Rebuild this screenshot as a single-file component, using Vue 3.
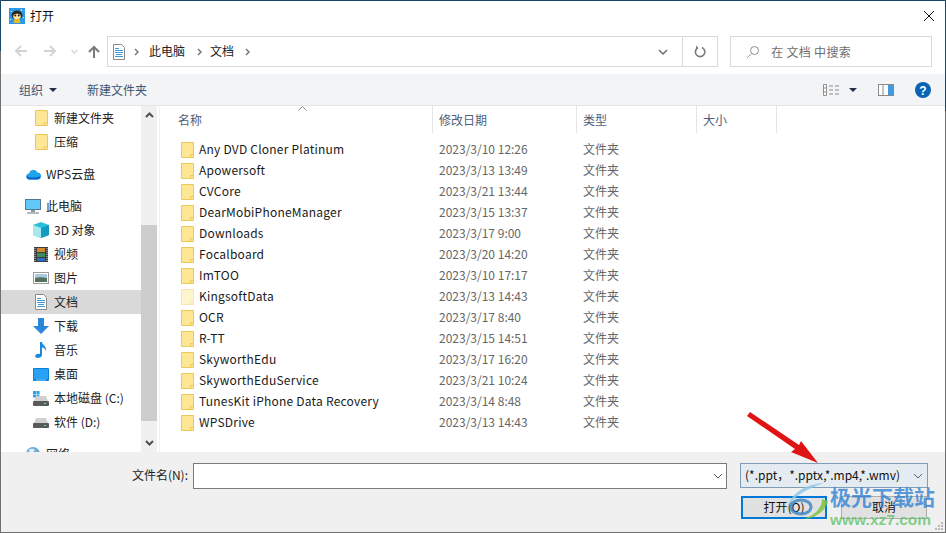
<script setup>
const sideItems = [
  { label: '新建文件夹', icon: 'folder', level: 2 },
  { label: '压缩', icon: 'folder', level: 2 },
  { label: 'WPS云盘', icon: 'cloud', level: 1, gap: true },
  { label: '此电脑', icon: 'pc', level: 1, gap: true },
  { label: '3D 对象', icon: 'cube', level: 2 },
  { label: '视频', icon: 'film', level: 2 },
  { label: '图片', icon: 'pic', level: 2 },
  { label: '文档', icon: 'doc', level: 2, active: true },
  { label: '下载', icon: 'down', level: 2 },
  { label: '音乐', icon: 'note', level: 2 },
  { label: '桌面', icon: 'desk', level: 2 },
  { label: '本地磁盘 (C:)', icon: 'diskc', level: 2 },
  { label: '软件 (D:)', icon: 'disk', level: 2 },
  { label: '网络', icon: 'globe', level: 1, gap: true }
]

const files = [
  { name: 'Any DVD Cloner Platinum', date: '2023/3/10 12:26' },
  { name: 'Apowersoft', date: '2023/3/13 13:49' },
  { name: 'CVCore', date: '2023/3/21 13:44' },
  { name: 'DearMobiPhoneManager', date: '2023/3/15 13:37' },
  { name: 'Downloads', date: '2023/3/17 9:00' },
  { name: 'Focalboard', date: '2023/3/20 14:20' },
  { name: 'ImTOO', date: '2023/3/10 17:17' },
  { name: 'KingsoftData', date: '2023/3/13 14:43', hidden: true },
  { name: 'OCR', date: '2023/3/17 8:40' },
  { name: 'R-TT', date: '2023/3/15 14:51' },
  { name: 'SkyworthEdu', date: '2023/3/17 16:20' },
  { name: 'SkyworthEduService', date: '2023/3/21 10:24' },
  { name: 'TunesKit iPhone Data Recovery', date: '2023/3/14 8:48' },
  { name: 'WPSDrive', date: '2023/3/13 14:43' }
]
</script>

<template>
  <div class="window">
    <div class="titlebar">
      <svg class="app-icon" width="16" height="16" viewBox="0 0 16 16">
        <rect width="16" height="16" fill="#2b9be8" />
        <path d="M2.500 7.500a5.500 5 0 0 1 11 0c0 2.500-2 3.500-5.500 3.500s-5.500-1-5.500-3.500z" fill="#2a2a1e" />
        <ellipse cx="8" cy="8.500" rx="3.800" ry="2.700" fill="#fbe9a8" />
        <circle cx="6.300" cy="7.500" r="1" fill="#1c1c1c" />
        <circle cx="9.700" cy="7.500" r="1" fill="#1c1c1c" />
        <path d="M5.500 11h5l1 4h-7z" fill="#f0b428" />
        <path d="M2 3l1 1M12 1l1 2M14 9l1 1M1 12l1-1" stroke="#d8f0ff" />
      </svg>
      <span class="title">打开</span>
      <svg class="close" width="12" height="12" viewBox="0 0 12 12">
        <path d="M1 1l10 10M11 1L1 11" stroke="#111" stroke-width="1" fill="none" />
      </svg>
    </div>

    <div class="navbar">
      <div class="nav-btns">
        <svg width="13" height="12" viewBox="0 0 13 12"><path d="M13 6H2M7 1L2 6l5 5" stroke="#d3d3d3" stroke-width="2" fill="none" /></svg>
        <svg class="fwd" width="13" height="12" viewBox="0 0 13 12"><path d="M0 6h11M6 1l5 5-5 5" stroke="#d3d3d3" stroke-width="2" fill="none" /></svg>
        <svg class="hist" width="7" height="5" viewBox="0 0 7 5"><path d="M.5 1l3 3 3-3" stroke="#d8d8d8" stroke-width="1.500" fill="none" /></svg>
        <svg class="up" width="12" height="13" viewBox="0 0 12 13"><path d="M6 13V2M1 7l5-5 5 5" stroke="#7a7a7a" stroke-width="2" fill="none" /></svg>
      </div>
      <div class="address">
        <svg class="addr-doc" width="12" height="16" viewBox="0 0 12 16">
          <path d="M.5.500h8l3 3v12H.5z" fill="#fff" stroke="#8a8a8a" />
          <path d="M2 4.500h4M2 6.500h8M2 8.500h8M3 10.500h6M2 12.500h8" stroke="#3f9ad6" />
        </svg>
        <svg class="chev first" width="5" height="8" viewBox="0 0 5 8"><path d="M1 1l3 3-3 3" stroke="#777" stroke-width="1.500" fill="none" /></svg>
        <span class="crumb">此电脑</span>
        <svg class="chev second" width="5" height="8" viewBox="0 0 5 8"><path d="M1 1l3 3-3 3" stroke="#777" stroke-width="1.500" fill="none" /></svg>
        <span class="crumb last">文档</span>
        <svg class="chev" width="5" height="8" viewBox="0 0 5 8"><path d="M1 1l3 3-3 3" stroke="#777" stroke-width="1.500" fill="none" /></svg>
        <span class="spacer"></span>
        <svg class="addr-drop" width="10" height="6" viewBox="0 0 10 6"><path d="M1 1l4 4 4-4" stroke="#707070" stroke-width="1.500" fill="none" /></svg>
        <div class="refresh">
          <svg width="12" height="13" viewBox="0 0 12 13">
            <path d="M3.500 3A4.700 4.700 0 1 0 8 2.600" stroke="#7c7c7c" stroke-width="1.600" fill="none" />
            <path d="M2 1l2.500 2.500L2 5.500z" fill="#7c7c7c" transform="translate(0 -.5)" />
          </svg>
        </div>
      </div>
      <div class="search">
        <svg width="14" height="14" viewBox="0 0 14 14">
          <circle cx="8.500" cy="5.500" r="4" stroke="#8c8c8c" fill="none" />
          <path d="M5.500 8.500L1 13" stroke="#c79a9a" />
        </svg>
        <span class="search-text">在 文档 中搜索</span>
      </div>
    </div>

    <div class="toolbar">
      <span class="tool-btn">组织</span>
      <span class="caret"></span>
      <span class="tool-btn new-folder">新建文件夹</span>
      <span class="spacer"></span>
      <svg width="16" height="12" viewBox="0 0 16 12">
        <path d="M.5.500h3v11h-3zM.5 4h3M.5 8h3" stroke="#8f8f8f" fill="#fff" />
        <path d="M6 2h4M12 2h4M6 6h4M12 6h4M6 10h4M12 10h4" stroke="#8a8a8a" />
      </svg>
      <span class="caret view-caret"></span>
      <svg class="pane-icon" width="16" height="12" viewBox="0 0 16 12">
        <rect x=".5" y=".5" width="15" height="11" fill="#fff" stroke="#8a8a8a" />
        <rect x="10" y="1" width="5" height="10" fill="#3f9ae4" />
        <path d="M5 1v10" stroke="#8a8a8a" />
      </svg>
      <svg class="help" width="16" height="16" viewBox="0 0 16 16">
        <circle cx="8" cy="8" r="8" fill="#0a63b5" />
        <text x="8" y="12.500" text-anchor="middle" class="help-mark">?</text>
      </svg>
    </div>

    <div class="main">
      <div class="sidebar">
        <div
          v-for="item in sideItems"
          :key="item.label"
          class="side-row"
          :class="{ active: item.active, gap: item.gap, top: item.level === 1 }"
        >
          <span class="side-icon">
            <svg v-if="item.icon === 'folder'" width="13" height="16" viewBox="0 0 13 16">
              <path d="M.5.500h12v15H.5z" fill="#fde794" stroke="#eac95a" />
              <path d="M9.500 15.500v-3h3" fill="none" stroke="#eac95a" />
            </svg>
            <svg v-else-if="item.icon === 'cloud'" width="15" height="12" viewBox="0 0 15 12">
              <path d="M3.500 11.500a3 3 0 0 1-.5-6A4.500 4.500 0 0 1 11.500 4.500a3.500 3.500 0 0 1 0 7z" fill="#22a4ec" />
              <path d="M.5 8c3.500 2 9 2 14 0-.3 2-1.500 3.500-3 3.500h-8C2 11.500.8 10 .5 8z" fill="#0b62cc" />
            </svg>
            <svg v-else-if="item.icon === 'pc'" width="16" height="15" viewBox="0 0 16 15">
              <rect x=".5" y=".5" width="15" height="10" fill="#62c8f8" stroke="#55788e" />
              <path d="M6 11h4v2H6z" fill="#8b99a4" />
              <path d="M2 14h12" stroke="#9aa5ad" stroke-width="1.500" />
            </svg>
            <svg v-else-if="item.icon === 'cube'" width="16" height="16" viewBox="0 0 16 16">
              <path d="M8 0l8 3v10l-8 3-8-3V3z" fill="#2cc0d6" />
              <path d="M0 3l8 3v10l-8-3z" fill="#a7e8ee" />
              <path d="M8 6l8-3v10l-8 3z" fill="#139ac0" />
            </svg>
            <svg v-else-if="item.icon === 'film'" width="14" height="15" viewBox="0 0 14 15">
              <rect width="14" height="15" fill="#3c3c3c" />
              <path d="M1 1v13M13 1v13" stroke="#ddd" stroke-dasharray="1 1" />
              <rect x="3" y="1" width="8" height="4" fill="#d18b2c" />
              <rect x="3" y="6" width="8" height="4" fill="#3b8c5a" />
              <rect x="3" y="11" width="8" height="3" fill="#2a6dc4" />
            </svg>
            <svg v-else-if="item.icon === 'pic'" width="16" height="12" viewBox="0 0 16 12">
              <rect x=".5" y=".5" width="15" height="11" fill="#fff" stroke="#9a9a9a" />
              <rect x="2" y="2" width="12" height="4" fill="#a9c9dd" />
              <path d="M2 6c3-1 8-1 12 0v4H2z" fill="#56705f" />
            </svg>
            <svg v-else-if="item.icon === 'doc'" width="12" height="16" viewBox="0 0 12 16">
              <path d="M.5.500h8l3 3v12H.5z" fill="#fff" stroke="#8a8a8a" />
              <path d="M2 4.500h4M2 6.500h8M2 8.500h8M3 10.500h6M2 12.500h8" stroke="#3f9ad6" />
            </svg>
            <svg v-else-if="item.icon === 'down'" width="16" height="16" viewBox="0 0 16 16">
              <path d="M5 0h6v8h5l-8 8-8-8h5z" fill="#2a86dc" />
            </svg>
            <svg v-else-if="item.icon === 'note'" width="12" height="16" viewBox="0 0 12 16">
              <path d="M5 0h2c0 3 5 4 4 9-1-2-2-3.500-4-3.500V13c0 2-2 3-4.500 3S-1 13 2 12c1.500-.5 3-.3 3 .2z" fill="#1a8ae0" />
            </svg>
            <svg v-else-if="item.icon === 'desk'" width="16" height="13" viewBox="0 0 16 13">
              <rect width="16" height="13" rx="1" fill="#0d7fda" />
              <rect x="1" y="1" width="14" height="10" fill="#2aa2f4" />
              <path d="M3 12h10" stroke="#8cd0f8" />
            </svg>
            <svg v-else-if="item.icon === 'diskc'" width="16" height="15" viewBox="0 0 16 15">
              <path d="M0 0h3v3H0zM3.500 0h3v3h-3zM0 3.500h3v3H0zM3.500 3.500h3v3h-3z" fill="#27a0ea" />
              <path d="M1 10l2-5h10l2 5z" fill="#d0d0d0" />
              <rect y="10" width="16" height="5" rx="1" fill="#5a5a5a" />
              <rect x="11" y="12" width="2" height="1" fill="#6ee06e" />
            </svg>
            <svg v-else-if="item.icon === 'disk'" width="16" height="11" viewBox="0 0 16 11">
              <path d="M1 6l2-5h10l2 5z" fill="#d0d0d0" />
              <rect y="6" width="16" height="5" rx="1" fill="#5a5a5a" />
              <rect x="11" y="8" width="2" height="1" fill="#6ee06e" />
            </svg>
            <svg v-else width="14" height="14" viewBox="0 0 14 14">
              <circle cx="7" cy="7" r="7" fill="#6ea9d8" />
              <path d="M3 3c2-2 5-1 6 0-1 2-3 2-4 4-1-1-2-2-2-4z" fill="#dfeef8" />
            </svg>
          </span>
          <span class="side-label">{{ item.label }}</span>
        </div>
      </div>

      <div class="scrollbar">
        <svg class="sb-up" width="9" height="6" viewBox="0 0 9 6"><path d="M1 5l3.500-3.500L8 5" stroke="#505050" stroke-width="2" fill="none" /></svg>
        <div class="sb-space"></div>
        <div class="sb-thumb"></div>
        <div class="sb-tail"></div>
        <svg class="sb-down" width="9" height="6" viewBox="0 0 9 6"><path d="M1 1l3.500 3.500L8 1" stroke="#505050" stroke-width="2" fill="none" /></svg>
      </div>

      <div class="list">
        <div class="list-head">
          <svg class="sort" width="9" height="5" viewBox="0 0 9 5"><path d="M.5 4.500l4-4 4 4" stroke="#8a8a8a" fill="none" /></svg>
          <div class="col col-name">名称</div>
          <div class="col col-date">修改日期</div>
          <div class="col col-type">类型</div>
          <div class="col col-size">大小</div>
        </div>
        <div class="rows">
          <div v-for="f in files" :key="f.name" class="row">
            <svg class="folder" :class="{ pale: f.hidden }" width="13" height="16" viewBox="0 0 13 16">
              <path d="M.5.500h12v15H.5z" fill="#fde794" stroke="#eac95a" />
              <path d="M9.500 15.500v-3h3" fill="none" stroke="#eac95a" />
            </svg>
            <span class="fname">{{ f.name }}</span>
            <span class="fdate">{{ f.date }}</span>
            <span class="ftype">文件夹</span>
          </div>
        </div>
      </div>
    </div>

    <div class="footer">
      <div class="foot-line">
        <label class="fn-label">文件名(N):</label>
        <div class="fn-input">
          <svg width="10" height="6" viewBox="0 0 10 6"><path d="M1 1l4 4 4-4" stroke="#606060" fill="none" /></svg>
        </div>
        <div class="filter">
          <span class="filter-text">(*.ppt，*.pptx,*.mp4,*.wmv)</span>
          <svg width="10" height="6" viewBox="0 0 10 6"><path d="M1 1l4 4 4-4" stroke="#606060" fill="none" /></svg>
        </div>
      </div>
      <div class="foot-btns">
        <button class="btn primary">打开(O)</button>
        <button class="btn">取消</button>
      </div>
      <svg class="grip" width="9" height="9" viewBox="0 0 9 9">
        <path d="M6 0h2v2H6zM3 3h2v2H3zM6 3h2v2H6zM0 6h2v2H0zM3 6h2v2H3zM6 6h2v2H6z" fill="#b9b9b9" />
      </svg>
    </div>

    <!-- 红色箭头和水印是盖在截图上的 -->
    <svg class="arrow" width="72" height="52" viewBox="0 0 72 52">
      <path d="M0 4L3 0L52 33L54 29L71 51L44 40L48 37z" fill="#e01414" />
    </svg>
    <div class="watermark">
      <svg class="wm-logo" width="45" height="44" viewBox="0 0 45 44">
        <path d="M38 2C20 3 4 12 2 27 6 16 20 8 38 2z" fill="#8cc8e8" opacity=".85" />
        <ellipse cx="15" cy="26" rx="10" ry="7" fill="none" stroke="#2d7cc0" stroke-width="3" opacity=".75" />
        <path d="M42 20c-2 10-14 18-24 18 10-4 18-10 18-20z" fill="#7cc242" opacity=".85" />
      </svg>
      <div class="wm-name">极光下载站</div>
      <div class="wm-url">www.xz7.com</div>
    </div>
  </div>
</template>

<style scoped>
.window {
  position: relative;
  width: 946px;
  height: 533px;
  box-sizing: border-box;
  display: flex;
  flex-direction: column;
  background: #fff;
  border: 1px solid #707070;
  border-top-color: #174766;
  font-family: "Noto Sans CJK SC", "Noto Sans", sans-serif;
  font-size: 12px;
  color: #1a1a1a;
}
/* 窗口边框上半段是深蓝色 */
.window::before,
.window::after {
  content: "";
  position: absolute;
  top: 0;
  width: 1px;
  background: #174766;
}
.window::before { left: -1px; height: 50px; }
.window::after { right: -1px; height: 110px; }

.titlebar {
  height: 33px;
  flex: none;
  box-sizing: border-box;
  display: flex;
  align-items: center;
  padding: 0 10px 4px 8px;
}
.title { margin-left: 5px; font-size: 12px; color: #111; }
.close { margin-left: auto; }
.app-icon { flex: none; }

.navbar {
  height: 40px;
  flex: none;
  display: flex;
  padding: 2px 13px 0 0;
  box-sizing: border-box;
}
.nav-btns { width: 106px; height: 30px; display: flex; align-items: center; padding-left: 13px; box-sizing: border-box; }
.fwd { margin-left: 17px; }
.hist { margin-left: 14px; }
.up { margin-left: 10px; }
.address {
  width: 612px;
  height: 31px;
  box-sizing: border-box;
  border: 1px solid #d9d9d9;
  display: flex;
  align-items: center;
  padding-left: 5px;
}
.addr-doc { margin-right: 9px; flex: none; }
.chev { flex: none; }
.chev.first { margin-right: 10px; }
.chev.second { margin-right: 8px; }
.crumb { margin-right: 12px; margin-bottom: 2px; color: #222; }
.crumb.last { margin-right: 11px; }
.spacer { flex: 1; }
.addr-drop { margin-right: 14px; }
.refresh {
  width: 34px;
  height: 29px;
  border-left: 1px solid #d9d9d9;
  display: flex;
  align-items: center;
  justify-content: center;
}
.search {
  width: 202px;
  height: 31px;
  margin-left: 12px;
  box-sizing: border-box;
  border: 1px solid #d9d9d9;
  display: flex;
  align-items: center;
  padding-left: 15px;
  gap: 11px;
  color: #6d6d6d;
}
.search-text { letter-spacing: .3px; }

.toolbar {
  height: 32px;
  flex: none;
  box-sizing: border-box;
  background: #f3f4f6;
  border-bottom: 1px solid #e4e5e7;
  display: flex;
  align-items: center;
  padding: 0 14px 0 18px;
}
.tool-btn { color: #3f5570; }
.caret {
  width: 0;
  height: 0;
  margin-left: 6px;
  border: 4px solid transparent;
  border-top: 4px solid #20304a;
  border-bottom: 0;
}
.new-folder { margin-left: 30px; }
.view-caret { margin-left: 10px; }
.pane-icon { margin-left: 21px; }
.help { margin-left: 21px; }
.help-mark { font: bold 12px "Liberation Sans", sans-serif; fill: #fff; }

.main { flex: 1; display: flex; min-height: 0; }
.sidebar { width: 140px; flex: none; overflow: hidden; }
.side-row {
  height: 24px;
  display: flex;
  align-items: center;
  padding-left: 30px;
  color: #222;
  white-space: nowrap;
}
.side-row.top { padding-left: 22px; }
.side-row.gap { margin-top: 8px; }
.side-row.active { background: #d9d9d9; }
.side-icon { width: 20px; flex: none; display: flex; justify-content: center; align-items: center; }
.side-label { margin-left: 3px; margin-bottom: 2px; }

.scrollbar {
  width: 16px;
  flex: none;
  background: #f0f0f0;
  display: flex;
  flex-direction: column;
  align-items: center;
}
.sb-up { margin-top: 6px; flex: none; }
.sb-space { height: 107px; flex: none; }
.sb-thumb { width: 100%; height: 196px; background: #cdcdcd; flex: none; }
.sb-tail { flex: 1; }
.sb-down { margin-bottom: 6px; flex: none; }

.list { flex: 1; margin-left: 2px; border-left: 1px solid #f2f2f2; }
.list-head { height: 27px; display: flex; position: relative; }
.sort { position: absolute; left: 138px; top: 0; }
.col {
  box-sizing: border-box;
  height: 27px;
  line-height: 27px;
  padding-left: 6px;
  color: #4f6078;
  border-right: 1px solid #e5e5e5;
}
.col-name { width: 273px; padding-left: 18px; }
.col-date { width: 144px; }
.col-type { width: 120px; }
.col-size { width: 80px; }
.rows { padding-top: 6px; }
.row { height: 21px; display: flex; align-items: center; padding-left: 21px; }
.folder { flex: none; }
.folder.pale { opacity: .45; }
.fname {
  width: 240px;
  margin-left: 5px;
  margin-bottom: 2px;
  flex: none;
  color: #1a1a1a;
  white-space: nowrap;
  letter-spacing: .22px;
}
.fdate { width: 144px; flex: none; color: #666; margin-bottom: 2px; }
.ftype { color: #666; margin-bottom: 2px; }

.footer {
  height: 80px;
  flex: none;
  background: #f0f0f0;
  position: relative;
  box-sizing: border-box;
  padding: 11px 17px 0 0;
}
.foot-line { display: flex; align-items: flex-start; }
.fn-label { width: 187px; flex: none; text-align: right; line-height: 24px; color: #222; }
.fn-input {
  width: 534px;
  height: 26px;
  margin-left: 5px;
  box-sizing: border-box;
  background: #fff;
  border: 1px solid #7a7a7a;
  display: flex;
  align-items: center;
  justify-content: flex-end;
  padding-right: 3px;
}
.filter {
  width: 188px;
  height: 25px;
  margin-left: 13px;
  box-sizing: border-box;
  background: #e5ecf1;
  border: 1px solid #7f9db9;
  display: flex;
  align-items: center;
  justify-content: space-between;
  padding: 0 4px;
  white-space: nowrap;
  color: #111;
}
.filter-text { margin-bottom: 2px; }
.foot-btns { display: flex; gap: 14px; margin: 7px 0 0 740px; }
.btn {
  width: 86px;
  height: 23px;
  box-sizing: border-box;
  padding: 0 0 2px;
  border: 1px solid #adadad;
  background: #e1e1e1;
  font: inherit;
  color: #111;
}
.btn.primary { border: 2px solid #0078d7; }
.grip { position: absolute; right: 1px; bottom: 1px; }

.arrow { position: absolute; left: 746px; top: 411px; }
.watermark { position: absolute; left: 785px; top: 480px; width: 155px; height: 50px; pointer-events: none; }
.wm-logo { position: absolute; left: 0; top: 0; }
.wm-name {
  position: absolute;
  left: 44px;
  top: 0;
  font-size: 21px;
  line-height: 30px;
  font-weight: 700;
  color: rgba(40, 125, 210, .75);
  white-space: nowrap;
}
.wm-url {
  position: absolute;
  left: 44px;
  top: 29px;
  font: bold 15.5px/20px "Liberation Sans", sans-serif;
  color: rgba(100, 195, 110, .8);
  white-space: nowrap;
}
</style>
